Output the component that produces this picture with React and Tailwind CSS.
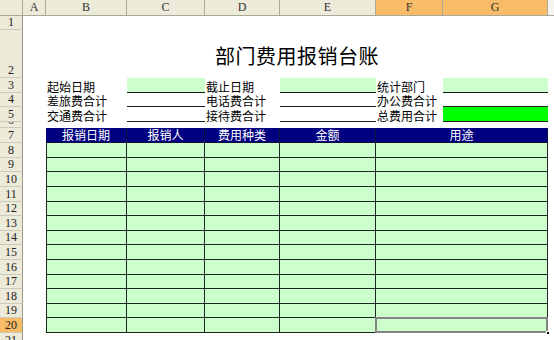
import React from "react";

const cols = [
  { key: "A", w: "w-[23px]" },
  { key: "B", w: "w-[81px]" },
  { key: "C", w: "w-[78px]" },
  { key: "D", w: "w-[75px]" },
  { key: "E", w: "w-[96px]" },
  { key: "F", w: "w-[67px]", sel: true },
  { key: "G", w: "w-[105px]", sel: true },
];

const RowNum = ({ n, sel }) => (
  <div
    className={`w-[23px] shrink-0 flex items-end justify-center overflow-hidden border-r border-b border-r-[#9d9a89] border-b-[#cfcbbb] text-[12px] leading-[13px] text-[#222] font-['Liberation_Serif',serif] ${
      sel ? "bg-[#f8bb68]" : "bg-[#ecead9]"
    }`}
  >
    {n}
  </div>
);

const Label = ({ w, children }) => (
  <div className={`${w} shrink-0 flex items-end pl-[1px] text-[12px] leading-[13px] whitespace-nowrap`}>
    {children}
  </div>
);

const Line = ({ w, fill }) => (
  <div className={`${w} shrink-0 border-b border-[#1a1a1a] ${fill || ""}`} />
);

const headers = [
  { w: "w-[81px]", text: "报销日期" },
  { w: "w-[78px]", text: "报销人" },
  { w: "w-[75px]", text: "费用种类" },
  { w: "w-[96px]", text: "金额" },
  { w: "w-[172px]", text: "用途" },
];

const dataRows = [8, 9, 10, 11, 12, 13, 14, 15, 16, 17, 18, 19, 20];
const rowH = ["h-[15px]", "h-[14px]", "h-[15px]", "h-[15px]", "h-[14px]", "h-[15px]", "h-[14px]", "h-[15px]", "h-[15px]", "h-[14px]", "h-[15px]", "h-[14px]", "h-[15px]"];

export default function App() {
  return (
    <div className="w-[554px] h-[340px] overflow-hidden bg-white text-black font-['Noto_Sans_CJK_SC','Liberation_Sans',sans-serif]">
      {/* column headers */}
      <div className="flex h-[16px] bg-[#ecead9] border-b border-[#aca899] text-[12px] leading-[15px] text-[#333] font-['Liberation_Serif',serif]">
        <div className="w-[23px] shrink-0 border-r border-[#aca899]" />
        {cols.map((c) => (
          <div
            key={c.key}
            className={`${c.w} shrink-0 text-center border-r border-[#aca899] ${c.sel ? "bg-[#f8bb68]" : ""}`}
          >
            {c.key}
          </div>
        ))}
        <div className="flex-1 bg-[#f6f5ef]" />
      </div>

      {/* row 1 */}
      <div className="flex h-[14px]">
        <RowNum n="1" />
      </div>

      {/* row 2: title */}
      <div className="flex h-[48px]">
        <RowNum n="2" />
        <div className="w-[23px] shrink-0" />
        <div className="w-[502px] shrink-0 pt-[15px] text-center text-[20px] leading-[22px] tracking-[0.5px]">
          部门费用报销台账
        </div>
      </div>

      {/* row 3 */}
      <div className="flex h-[15px]">
        <RowNum n="3" />
        <div className="w-[23px] shrink-0" />
        <Label w="w-[81px]">起始日期</Label>
        <Line w="w-[78px]" fill="bg-[#ccffcc]" />
        <Label w="w-[75px]">截止日期</Label>
        <Line w="w-[96px]" fill="bg-[#ccffcc]" />
        <Label w="w-[67px]">统计部门</Label>
        <Line w="w-[105px]" fill="bg-[#ccffcc]" />
      </div>

      {/* row 4 */}
      <div className="flex h-[14px]">
        <RowNum n="4" />
        <div className="w-[23px] shrink-0" />
        <Label w="w-[81px]">差旅费合计</Label>
        <Line w="w-[78px]" />
        <Label w="w-[75px]">电话费合计</Label>
        <Line w="w-[96px]" />
        <Label w="w-[67px]">办公费合计</Label>
        <Line w="w-[105px]" />
      </div>

      {/* row 5 */}
      <div className="flex h-[15px]">
        <RowNum n="5" />
        <div className="w-[23px] shrink-0" />
        <Label w="w-[81px]">交通费合计</Label>
        <Line w="w-[78px]" />
        <Label w="w-[75px]">接待费合计</Label>
        <Line w="w-[96px]" />
        <Label w="w-[67px]">总费用合计</Label>
        <Line w="w-[105px]" fill="bg-[#00ff00]" />
      </div>

      {/* row 6 (squeezed) */}
      <div className="flex h-[6px]">
        <RowNum n="6" />
      </div>

      {/* row 7: table header */}
      <div className="flex h-[15px]">
        <RowNum n="7" />
        <div className="w-[23px] shrink-0" />
        {headers.map((h) => (
          <div
            key={h.text}
            className={`${h.w} shrink-0 bg-[#000080] text-white text-center text-[12px] leading-[14px] border-r border-b border-[#10103a]`}
          >
            {h.text}
          </div>
        ))}
      </div>

      {/* rows 8-20 */}
      {dataRows.map((n, i) => (
        <div key={n} className={`flex ${rowH[i]}`}>
          <RowNum n={n} sel={n === 20} />
          <div className="w-[23px] shrink-0" />
          <div className="w-[81px] shrink-0 bg-[#ccffcc] border-l border-r border-b border-[#1c261c]" />
          <div className="w-[78px] shrink-0 bg-[#ccffcc] border-r border-b border-[#1c261c]" />
          <div className="w-[75px] shrink-0 bg-[#ccffcc] border-r border-b border-[#1c261c]" />
          <div className="w-[96px] shrink-0 bg-[#ccffcc] border-r border-b border-[#1c261c]" />
          <div className="relative w-[172px] shrink-0 bg-[#ccffcc] border-r border-b border-[#1c261c]">
            {n === 20 && (
              <>
                <div className="absolute -left-[1px] -top-[1px] -right-[1px] -bottom-[1px] border-[2px] border-[#858585]" />
                <div className="absolute -right-[3px] -bottom-[3px] w-[4px] h-[4px] bg-black border border-white" />
              </>
            )}
          </div>
        </div>
      ))}

      {/* row 21 */}
      <div className="flex h-[10px]">
        <div className="w-[23px] shrink-0 flex items-start justify-center overflow-hidden border-r border-[#9d9a89] bg-[#ecead9] text-[12px] leading-[14px] text-[#222] font-['Liberation_Serif',serif]">
          21
        </div>
      </div>
    </div>
  );
}
